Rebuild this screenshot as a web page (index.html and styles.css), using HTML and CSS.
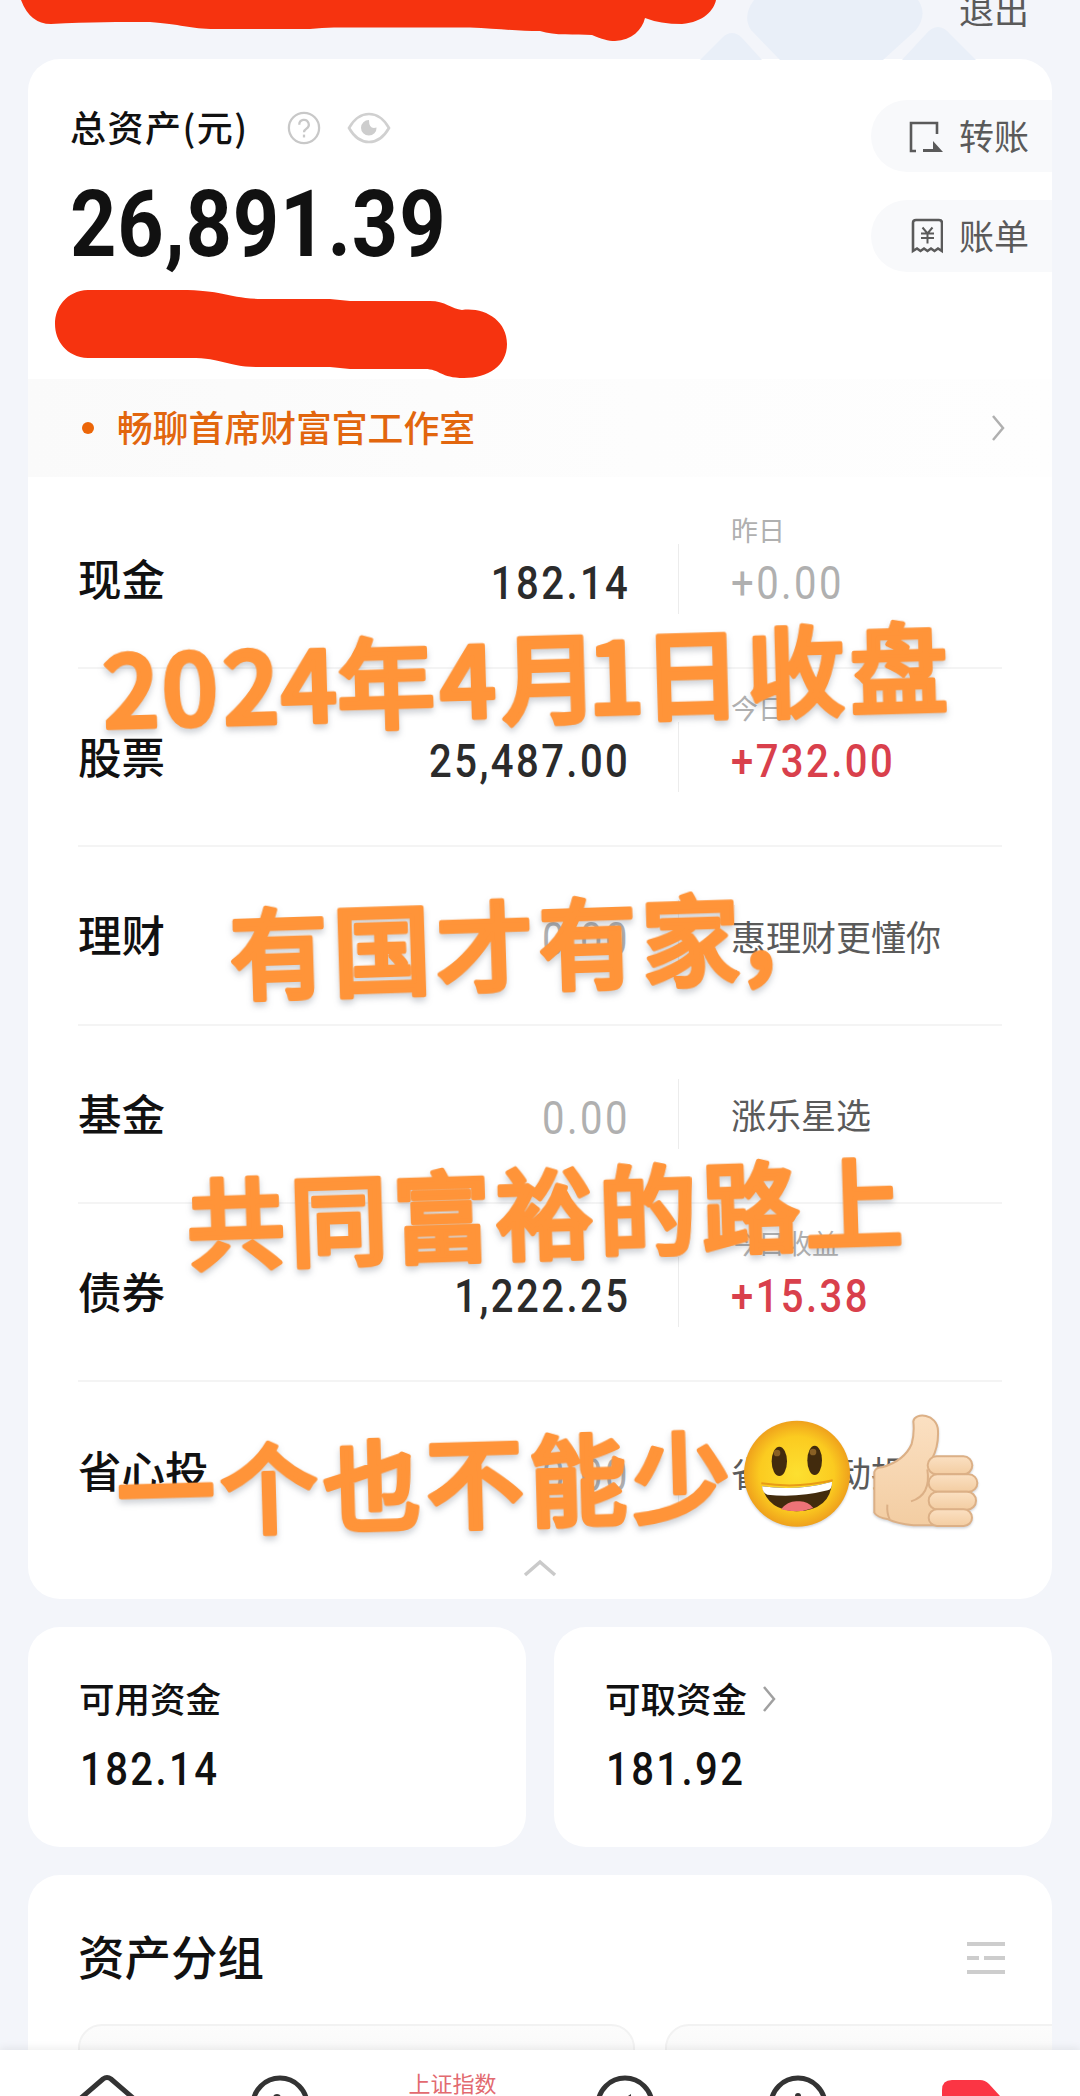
FILE: index.html
```
<!DOCTYPE html>
<html lang="zh-CN">
<head>
<meta charset="utf-8">
<title>总资产</title>
<link rel="stylesheet" href="styles.css">
</head>
<body>
<main class="screen">
  <header class="top">
    <svg class="top-art" width="300" height="60" viewBox="0 0 300 60"><g fill="#e9eff8"><path d="M54 0Q42 16 51 30L80 60H183L216 30Q228 14 218 0Z"/><path d="M0 60L22 38Q32 28 42 38L62 60Z"/><path d="M202 60L226 34Q238 20 250 34L276 60Z"/></g></svg>
    <span class="logout">退出</span>
  </header>

  <section class="card assets">
    <div class="summary">
      <div class="total">
        <div class="total-label"><span class="total-name">总资产(元)</span>
          <svg width="34" height="34" viewBox="0 0 36 36" fill="none" stroke="#c8c8c8" stroke-width="2.400"><circle cx="18" cy="18" r="16"/><path d="M13 14.500a5 5 0 1 1 7.500 4.200C18.600 19.800 18 20.500 18 22.600"/><path d="M18 25v3"/></svg>
          <svg class="eye" width="44" height="36" viewBox="0 0 44 36"><path d="M2 18Q10 4 22 4T42 18Q34 32 22 32T2 18Z" fill="none" stroke="#d0d0d0" stroke-width="2.600"/><path d="M22 10a7.800 7.800 0 1 0 7.600 7.600Q22 20 22 10Z" fill="#cdcdcd"/></svg>
        </div>
        <div class="total-value"><span class="din">26,891.39</span></div>
      </div>
      <div class="actions">
        <div class="action"><svg width="36" height="36" viewBox="0 0 36 36"><path d="M9 33H4V5H30V16" fill="none" stroke="#5a5a5a" stroke-width="2.600"/><path d="M16 31H26V23L36 34H16Z" fill="#5a5a5a"/></svg>转账</div>
        <div class="action"><svg width="36" height="36" viewBox="0 0 36 36" fill="none" stroke="#5a5a5a" stroke-width="2.600"><path d="M6 33V5Q6 2 9 2H32Q35 2 35 5V33L31 30.500 27.500 33 24 30.500 20.500 33 17 30.500 13.500 33 10 30.500Z"/><path stroke-width="2" d="M15.500 9.500L20.500 15.500L25.500 9.500M20.500 15.500V25.500M14 15.500H27M14 20H27"/></svg>账单</div>
      </div>
    </div>
    <div class="studio"><i class="dot"></i><span class="studio-name">畅聊首席财富官工作室</span><svg class="more" width="16" height="30" viewBox="0 0 16 30"><path d="M3 3L13 15L3 27" fill="none" stroke="#b0b0b0" stroke-width="2.500"/></svg></div>
    <div class="rows">
      <div class="row"><b>现金</b><div class="amount"><span class="din">182.14</span></div><div class="side muted"><small>昨日</small><span class="din">+0.00</span></div></div>
      <div class="row"><b>股票</b><div class="amount"><span class="din">25,487.00</span></div><div class="side gain"><small>今日</small><span class="din">+732.00</span></div></div>
      <div class="row"><b>理财</b><div class="amount muted"><span class="din">0.00</span></div><div class="side">惠理财更懂你</div></div>
      <div class="row"><b>基金</b><div class="amount muted"><span class="din">0.00</span></div><div class="side">涨乐星选</div></div>
      <div class="row"><b>债券</b><div class="amount"><span class="din">1,222.25</span></div><div class="side gain"><small>今日收益</small><span class="din">+15.38</span></div></div>
      <div class="row"><b>省心投</b><div class="amount muted"><span class="din">0.00</span></div><div class="side">省心自动投</div></div>
    </div>
    <svg class="fold" width="34" height="20" viewBox="0 0 34 20"><path d="M2 17L17 4L32 17" fill="none" stroke="#cacaca" stroke-width="3.500"/></svg>
  </section>

  <section class="funds">
    <div class="card fund"><div class="fund-name">可用资金</div><span class="din">182.14</span></div>
    <div class="card fund"><div class="fund-name">可取资金<svg width="16" height="30" viewBox="0 0 16 30"><path d="M3 3L13 15L3 27" fill="none" stroke="#a0a0a0" stroke-width="2.500"/></svg></div><span class="din">181.92</span></div>
  </section>

  <section class="card groups">
    <div class="groups-head"><h2>资产分组</h2><svg width="38" height="36" viewBox="0 0 38 36"><path d="M0 3H38M0 17H12M17 17H38M0 31H38" stroke="#cdcdcd" stroke-width="4"/></svg></div>
    <div class="tiles"><div class="tile"></div><div class="tile"></div></div>
  </section>

  <nav class="tabs">
    <svg width="60" height="46" viewBox="0 0 60 46"><path d="M4 48L26 29Q30 26 34 29L56 48" fill="none" stroke="#333" stroke-width="5"/></svg>
    <svg width="64" height="46" viewBox="0 0 64 46"><circle cx="32" cy="55" r="27" fill="none" stroke="#333" stroke-width="5"/><circle cx="29" cy="48" r="4" fill="#333"/></svg>
    <span>上证指数</span>
    <svg width="64" height="46" viewBox="0 0 64 46"><circle cx="32" cy="55" r="27" fill="none" stroke="#333" stroke-width="5"/><path d="M35 46L38 44V46Z" fill="#333"/></svg>
    <svg width="64" height="46" viewBox="0 0 64 46"><circle cx="32" cy="55" r="27" fill="none" stroke="#333" stroke-width="5"/><circle cx="32" cy="46" r="3" fill="#333"/></svg>
    <svg width="60" height="46" viewBox="0 0 60 46"><path d="M2 46V40Q2 30 12 30H40Q45 30 49 34L60 46Z" fill="#fb3544"/></svg>
  </nav>

  <svg class="notes" width="1080" height="2096" viewBox="0 0 1080 2096">
    <g fill="#f6330f">
      <path d="M21 0Q30 24 51 24C90 22 120 22 150 22C180 24 190 29 215 29H310Q325 27 340 27.500H470C500 29 520 31 540 31C555 36 575 34 592 35C602 39 608 41 615 41C632 40 642 30 645 18Q660 24 682 24C704 22 714 10 716 0Z"/>
      <path d="M88 290H180C225 290 225 298 262 299H330L350 301H430C445 301 452 309 462 310C484 307 507 320 507 344C507 366 488 378 464 378C440 378 440 369 425 369H350L330 367H260C225 367 225 358 190 358H88C44 356 44 292 88 290Z"/>
    </g>
    <g class="scrawl">
      <text x="0 59 120 178 234 337 398 485 540 644 747" transform="translate(104 728) rotate(-1.600)">2024年4月1日收盘</text>
      <text x="0 103 206 309 412 505" transform="translate(231 992) rotate(-1.800)">有国才有家，</text>
      <text x="0 103 206 309 412 515 618" transform="translate(188 1262) rotate(-1.800)">共同富裕的路上</text>
      <text x="0 103 206 309 412 515" transform="translate(118 1530) rotate(-1.600)">一个也不能少</text>
    </g>
    <defs>
      <radialGradient id="face"><stop offset="0" stop-color="#fde030"/><stop offset=".7" stop-color="#fbcb20"/><stop offset="1" stop-color="#efa11c"/></radialGradient>
      <linearGradient id="skin" x1="0" y1="0" x2="0" y2="1"><stop offset="0" stop-color="#fbe0c2"/><stop offset="1" stop-color="#f3cda2"/></linearGradient>
    </defs>
    <g class="emoji" transform="translate(680 1380) scale(.33333)">
      <circle cx="351" cy="281" r="159" fill="url(#face)"/>
      <ellipse cx="298" cy="244" rx="23" ry="44" fill="#422b0d"/><ellipse cx="404" cy="241" rx="22" ry="44" fill="#422b0d"/>
      <circle cx="291" cy="219" r="10" fill="#896024"/><circle cx="399" cy="216" r="10" fill="#896024"/>
      <path d="M246 319Q352 334 456 305Q452 390 350 394Q264 392 246 319Z" fill="#422b0d"/>
      <path d="M246 319Q352 334 456 305Q457 328 443 331Q352 354 262 344Q248 340 246 319Z" fill="#fff"/>
      <path d="M303 388Q324 362 353 364Q382 361 400 384Q352 402 303 388Z" fill="#ee7377"/>
      <path d="M244 310Q352 326 458 301" fill="none" stroke="#e89b17" stroke-width="6"/>
    </g>
    <g class="emoji" transform="translate(680 1380) scale(.33333)" fill="url(#skin)" stroke="#dcb086" stroke-width="6" stroke-linejoin="round">
      <path d="M700 124C704 96 772 100 774 152Q776 200 756 236L850 240V436H700Q650 430 625 418Q590 412 583 398V276Q588 262 606 262C660 246 684 218 695 192Q704 160 700 124Z"/>
      <rect x="743" y="229" width="134" height="54" rx="27"/><rect x="746" y="283" width="146" height="52" rx="26"/><rect x="746" y="335" width="142" height="54" rx="27"/><rect x="746" y="388" width="130" height="50" rx="25"/>
      <path d="M742 268Q754 345 693 364M622 374Q620 400 629 418" fill="none"/>
    </g>
  </svg>
</main>
</body>
</html>
```
FILE: styles.css
```
* { box-sizing: border-box; }
body { margin: 0; background: #f3f5fa; font-family: "Noto Sans CJK SC", sans-serif; color: #111; }
svg { display: block; flex: none; }
.screen { position: relative; width: 1080px; height: 2096px; overflow: hidden; display: flex; flex-direction: column; }
.top { position: relative; height: 59px; flex: none; }
.top-art { position: absolute; left: 700px; top: 0; }
.logout { position: absolute; left: 959px; top: -17px; font-size: 35px; line-height: 52px; color: #5a5a5a; }
.card { background: #fff; border-radius: 32px; margin: 0 28px; }
.din { display: inline-block; font-family: Roboto, "Liberation Sans", sans-serif; font-size: 46px; font-weight: 500; line-height: 50px; letter-spacing: 2.800px; transform: scaleX(.87); transform-origin: left; white-space: nowrap; }

.assets { height: 1540px; flex: none; }
.summary { display: flex; justify-content: space-between; height: 320px; }
.total { padding: 42px 0 0 42px; }
.total-label { display: flex; align-items: center; height: 54px; }
.total-name { width: 217px; font-size: 36px; font-weight: 500; line-height: 54px; letter-spacing: 1.500px; margin-top: -5px; white-space: nowrap; }
.eye { margin-left: 26px; }
.total-value { margin-top: 15px; }
.total-value .din { font-size: 92px; line-height: 110px; font-weight: 700; letter-spacing: 1px; transform: scaleX(.88); }
.actions { padding-top: 41px; display: flex; flex-direction: column; gap: 28px; }
.action { display: flex; align-items: center; gap: 16px; width: 181px; height: 72px; padding: 0 0 3px 36px; background: #f8f9fb; border-radius: 36px 0 0 36px; font-size: 35px; color: #5a5a5a; white-space: nowrap; }
.action svg { margin-top: 3px; }
.studio { display: flex; align-items: center; height: 98px; padding: 0 46px 0 54px; background: linear-gradient(90deg, #fafafa, #fdfdfd 60%, #fefefe); color: #e2660e; font-size: 35.800px; font-weight: 500; }
.studio-name { margin-top: -4px; }
.dot { width: 12px; height: 12px; margin-right: 23px; border-radius: 50%; background: #ec6608; }
.more { margin-left: auto; }

.rows { padding: 14px 50px 0; }
.row { display: grid; grid-template-columns: 160px 389px 1fr; align-items: center; height: 178.200px; border-bottom: 2px solid #f4f4f4; }
.row:last-child { border-bottom: 0; }
.row b { font-size: 43.500px; font-weight: 500; line-height: 60px; white-space: nowrap; margin-top: -2px; }
.amount { text-align: right; color: #2b2b2b; padding-top: 8px; }
.amount .din { transform-origin: right; margin-right: -3px; }
.side { position: relative; height: 70px; display: flex; align-items: center; margin-left: 51px; padding-left: 52px; border-left: 1px solid #ececec; font-size: 35px; color: #5a5a5a; white-space: nowrap; }
.side .din { margin-top: 8px; }
.side small { position: absolute; left: 52px; top: -34px; font-size: 27px; line-height: 40px; color: #b0b0b0; }
.row .muted { color: #b0b0b0; }
.muted .din { font-weight: 400; }
.gain { color: #d9404c; }
.fold { margin: -2px auto 0; }

.funds { display: flex; gap: 28px; margin: 28px 28px; }
.fund { flex: 1; height: 220px; margin: 0; padding: 43px 51px; }
.fund-name { display: flex; align-items: center; gap: 14px; height: 54px; font-size: 35.500px; font-weight: 500; }
.fund-name svg { margin-top: 3px; }
.fund .din { margin-top: 20px; margin-left: 1px; }
.groups { height: 300px; flex: none; padding: 46px 0 0 50px; overflow: hidden; border-radius: 32px 32px 0 0; }
.groups-head { display: flex; align-items: center; justify-content: space-between; height: 66px; padding-right: 47px; }
.groups-head svg { margin-top: 10px; }
h2 { margin: 0; font-size: 46.500px; font-weight: 500; }
.tiles { display: flex; gap: 30px; margin-top: 37px; }
.tile { flex: none; width: 557px; height: 100px; border: 2px solid #f2f2f2; border-radius: 24px; background: linear-gradient(#fcfcfc, #f7f7f7 50%); }
.tabs { position: absolute; left: 0; right: 0; top: 2050px; height: 46px; background: #fff; box-shadow: 0 -2px 8px rgba(0,0,0,.07); display: grid; grid-template-columns: repeat(6, 172.600px); padding-left: 21px; justify-items: center; }
.tabs span { font-size: 22px; line-height: 28px; margin-top: 18px; color: #e26a70; }

.notes { position: absolute; left: 0; top: 0; }
.scrawl text { font-family: "Noto Sans CJK SC", sans-serif; font-size: 98px; font-weight: 500; fill: #ff9439; stroke: #ff9439; stroke-width: 4.500px; stroke-linejoin: round; }
.scrawl, .emoji { filter: drop-shadow(0 4px 3px rgba(60,70,90,.25)); }
```
